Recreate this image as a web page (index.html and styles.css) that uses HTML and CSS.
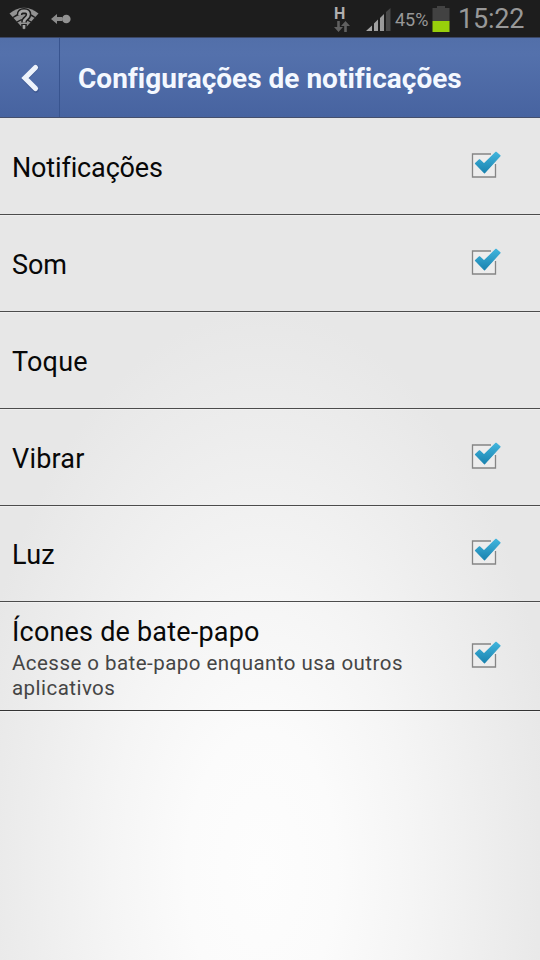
FILE: index.html
```html
<!DOCTYPE html>
<html lang="pt-BR">
<head>
<meta charset="utf-8">
<title>Configurações de notificações</title>
<link rel="stylesheet" href="styles.css">
</head>
<body>
<svg class="defs" width="0" height="0" aria-hidden="true">
  <defs>
    <linearGradient id="tick" x1="0" y1="0" x2="0" y2="1"><stop offset="0" stop-color="#40b4dc"/><stop offset="1" stop-color="#1a83b0"/></linearGradient>
    <linearGradient id="bars" x1="0" y1="0" x2="1" y2="0"><stop offset="0" stop-color="#a8a8a8"/><stop offset="1" stop-color="#989898"/></linearGradient>
    <symbol id="check" viewBox="0 0 32 32">
      <path d="M21 4H2.500V27H25.500V14" fill="#ededed" stroke="#858585" stroke-width="1.300"/>
      <path d="M5.500 13.500L9.500 9.800L14 14L26 2.300L30 5.800L14.500 22.900Z" fill="url(#tick)" stroke="url(#tick)" stroke-width="1.200" stroke-linejoin="round"/>
    </symbol>
  </defs>
</svg>
<div class="screen">
  <div class="status">
    <svg class="wifi" width="30" height="24" viewBox="0 0 30 24">
      <path d="M0.500 6.500Q15-5 29.500 6.500L15 22.500Z" fill="#929292"/>
      <path d="M4 10.500Q15 2.500 26 10.500M8 15Q15 10 22 15" fill="none" stroke="#1d1d1d" stroke-width="1.300"/>
      <path d="M10.500 8Q10.500 3.800 15 3.800Q19.500 3.900 19.500 7.500Q19.500 9.800 17 11.500Q15 12.800 15 15.500M15 17V21" fill="none" stroke="#1d1d1d" stroke-width="5.600"/>
      <path d="M10.500 8Q10.500 3.800 15 3.800Q19.500 3.900 19.500 7.500Q19.500 9.800 17 11.500Q15 12.800 15 15.500M15 18V21.500" fill="none" stroke="#a4a4a4" stroke-width="2.700"/>
    </svg>
    <svg class="link" width="20" height="12" viewBox="0 0 20 12"><path d="M0 6L6 1V4H11V8H6V11Z" fill="#8c8c8c"/><circle cx="15.300" cy="6" r="4.300" fill="#929292"/></svg>
    <div class="network"><span>H</span>
      <svg width="16" height="12" viewBox="0 0 16 12"><path d="M4.500 0V8M11.500 11V3" stroke="#606060" stroke-width="2.600"/><path d="M0 6H9L4.500 11ZM7 5L11.500 0L16 5Z" fill="#606060"/></svg>
    </div>
    <svg class="signal" width="26" height="24" viewBox="0 0 26 24"><path d="M0 23L6 17.500V23ZM8 15.500L12 11.500V23H8ZM14 10L18 6V23H14Z" fill="url(#bars)"/><path d="M20 4L24.500 0V23H20Z" fill="#484848"/></svg>
    <span class="percent">45%</span>
    <svg class="battery" width="18" height="26" viewBox="0 0 18 26"><path d="M5 0H13V2H17.500V15H0.500V2H5Z" fill="#424242"/><path d="M0.500 15H17.500V26H0.500Z" fill="#98cf0b"/></svg>
    <span class="clock">15:22</span>
  </div>
  <header class="bar">
    <div class="back"><svg width="24" height="34" viewBox="0 0 24 34"><path d="M18 6.500L7 18L18 29" fill="none" stroke="#30497f" stroke-width="5.500" stroke-linecap="round" opacity=".45"/><path d="M17.500 6.500L7 17L17.500 27.500" fill="none" stroke="#eef3fb" stroke-width="5.200" stroke-linecap="round"/></svg></div>
    <h1>Configurações de notificações</h1>
  </header>
  <main>
    <div class="row"><span class="label tight">Notificações</span><svg class="box"><use href="#check"/></svg></div>
    <div class="row"><span class="label tight">Som</span><svg class="box"><use href="#check"/></svg></div>
    <div class="row"><span class="label">Toque</span></div>
    <div class="row"><span class="label">Vibrar</span><svg class="box"><use href="#check"/></svg></div>
    <div class="row short"><span class="label">Luz</span><svg class="box"><use href="#check"/></svg></div>
    <div class="row tall"><div class="texts"><span class="label">Ícones de bate-papo</span><p>Acesse o bate-papo enquanto usa outros<br>aplicativos</p></div><svg class="box"><use href="#check"/></svg></div>
  </main>
</div>
</body>
</html>
```
FILE: styles.css
```css
* { box-sizing: border-box; }
body { margin: 0; font-family: Roboto, sans-serif; font-variant-ligatures: none; }
.defs { position: absolute; }
.screen {
  width: 540px; height: 960px; overflow: hidden;
  display: flex; flex-direction: column;
  background: radial-gradient(ellipse 300px 560px at 262px 870px, #fdfdfd 0%, #fbfbfb 25%, #f5f5f5 50%, #ededed 78%, #e7e7e7 100%);
}
.status { height: 37px; background: #1d1d1d; display: flex; align-items: flex-start; color: #989898; flex: none; }
.wifi { margin: 7px 0 0 9px; }
.link { margin: 13px 0 0 12px; }
.network { margin: 6px 0 0 262px; width: 18px; height: 28px; display: flex; flex-direction: column; }
.network span { font-size: 16px; line-height: 15px; font-weight: 700; color: #b0b0b0; padding-left: 1px; }
.network svg { margin-left: 1px; }
.signal { margin: 8px 0 0 15px; }
.percent { width: 37px; margin: 9px 0 0 3px; font-size: 18px; line-height: 22px; white-space: nowrap; }
.battery { margin: 6px 0 0 0; }
.clock { margin: 3px 0 0 8px; font-size: 27px; line-height: 32px; letter-spacing: -.2px; white-space: nowrap; }
.bar {
  height: 81px; flex: none; display: flex; align-items: stretch;
  border-top: 1px solid #3b4766; border-bottom: 1px solid #454f6c;
  background: linear-gradient(#526fa9, #5471ac 20%, #4763a0);
}
.back { width: 60px; border-right: 1px solid #38548f; display: flex; padding: 23px 0 0 18px; }
h1 { margin: 0; padding-left: 18px; color: #f4f8ff; font-size: 28px; line-height: 81px; font-weight: 700; white-space: nowrap; }
.row { height: 97px; border-bottom: 1px solid #4c4c4c; padding: 3px 38px 0 12px; display: flex; align-items: center; justify-content: space-between; box-shadow: 0 1px 0 rgba(255,255,255,.35); }
.row.short { height: 96px; }
.row.tall { height: 109px; border-bottom-color: #333; }
.label { color: #080808; font-size: 27px; line-height: 32px; letter-spacing: .2px; white-space: nowrap; display: block; }
.label.tight { letter-spacing: -.15px; }
.box { width: 32px; height: 32px; flex: none; margin-top: -4px; }
.texts { padding-top: 1px; }
p { margin: 3px 0 0; font-size: 20.5px; line-height: 25px; letter-spacing: .46px; color: #454545; white-space: nowrap; }
```
